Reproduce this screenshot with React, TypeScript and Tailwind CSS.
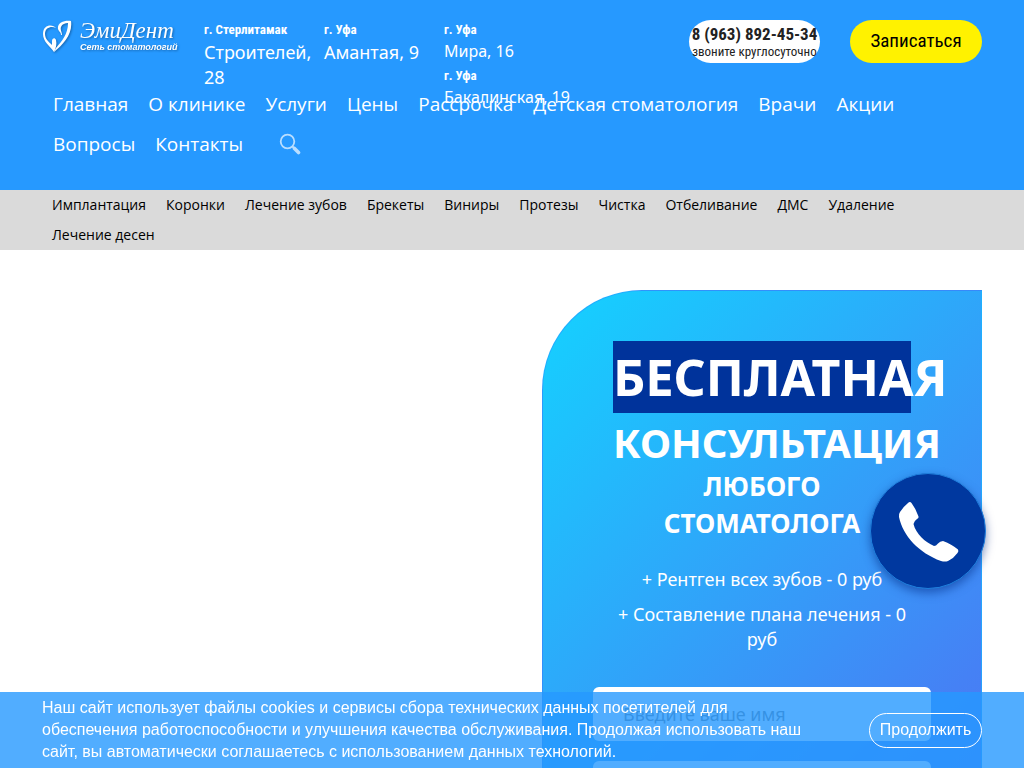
import React from 'react';

const MENU = [
  'Главная',
  'О клинике',
  'Услуги',
  'Цены',
  'Рассрочка',
  'Детская стоматология',
  'Врачи',
  'Акции',
  'Вопросы',
  'Контакты',
];

const SERVICES = [
  'Имплантация',
  'Коронки',
  'Лечение зубов',
  'Брекеты',
  'Виниры',
  'Протезы',
  'Чистка',
  'Отбеливание',
  'ДМС',
  'Удаление',
  'Лечение десен',
];

const Logo: React.FC = () => (
  <a href="#" className="flex w-[162px] shrink-0 items-start text-white">
    <svg viewBox="0 0 30 34" className="mr-2 h-[34px] w-[30px] drop-shadow-[1px_1px_1px_#1565b0]" fill="currentColor">
      <path d="M14 8C11 4 1 4 1 14c0 8 7 12 11 18 2-4 3-8 2-12-1-3-4-2-4 1v4C7 22 3 19 3 14c0-7 7-8 11-6Z" />
      <path d="M29 1C22 0 15 3 16 9c1 3 3 3 3 6h1c0-3-2-5-1-8 1-3 4-4 7-4 0 11-6 18-12 25-1 2-2 3-2 4C21 25 31 14 29 1Z" />
    </svg>
    <span className="flex flex-col whitespace-nowrap italic drop-shadow-[1px_1px_1px_#1565b0]">
      <span className="font-['Liberation_Serif',serif] text-[23px] leading-[22px]">ЭмиДент</span>
      <span className="font-['Liberation_Sans',sans-serif] text-[9px] font-bold leading-[10px]">
        Сеть стоматологий
      </span>
    </span>
  </a>
);

const Address: React.FC<{ city: string; street: string; small?: boolean }> = ({ city, street, small }) => (
  <div>
    <div className="font-['Roboto_Condensed','Liberation_Sans_Narrow',sans-serif] text-[13px] font-bold leading-5">
      {city}
    </div>
    <div className={small ? 'whitespace-nowrap pb-1 text-base leading-[22px]' : 'text-lg leading-[25px]'}>{street}</div>
  </div>
);

const Header: React.FC = () => (
  <header className="bg-[#2699ff] px-[42px] pt-5 pb-[26px] text-white">
    {/* contacts: the last address column runs over the menu */}
    <div className="flex h-16 items-start">
      <Logo />
      <div className="grid grid-cols-[120px_120px_120px]">
        <Address city="г. Стерлитамак" street="Строителей, 28" />
        <Address city="г. Уфа" street="Амантая, 9" />
        <div>
          <Address city="г. Уфа" street="Мира, 16" small />
          <Address city="г. Уфа" street="Бакалинская, 19" small />
        </div>
      </div>
      <div className="ml-auto flex gap-[30px] font-['Roboto_Condensed','Liberation_Sans_Narrow',sans-serif]">
        <a
          href="tel:89638924534"
          className="flex h-[43px] w-[131px] flex-col items-center justify-center whitespace-nowrap rounded-full bg-white text-[#222]"
        >
          <span className="text-[17px] font-bold leading-5">8 (963) 892-45-34</span>
          <span className="text-[13px] leading-4">звоните круглосуточно</span>
        </a>
        <button className="h-[43px] w-[132px] rounded-full bg-[#fff200] text-[19px] text-black">Записаться</button>
      </div>
    </div>
    <nav className="flex flex-wrap items-center gap-x-5 px-[11px] font-['Open_Sans',sans-serif] text-[19px] leading-10">
      {MENU.map((item) => (
        <a key={item} href="#" className="whitespace-nowrap">
          {item}
        </a>
      ))}
      <button aria-label="Поиск" className="ml-4">
        <svg viewBox="0 0 22 22" className="size-[22px]" fill="none" stroke="#b9deff">
          <circle cx="8.5" cy="8.5" r="6.8" strokeWidth="1.8" />
          <path d="m13.5 13.5 2 2" strokeWidth="2" />
          <path d="m15.5 15.5 4 4" strokeWidth="3.6" strokeLinecap="round" />
        </svg>
      </button>
    </nav>
  </header>
);

const ServicesNav: React.FC = () => (
  <nav className="flex flex-wrap gap-x-5 bg-[#dadada] px-[52px] font-['Open_Sans',sans-serif] text-sm leading-[30px] text-black">
    {SERVICES.map((item) => (
      <a key={item} href="#" className="whitespace-nowrap">
        {item}
      </a>
    ))}
  </nav>
);

const OfferCard: React.FC = () => (
  <section className="w-[440px] rounded-tl-[100px] border border-[#2699ff]/60 bg-[linear-gradient(135deg,#14d2ff_0px,#4581f5_573px,#586af0_800px)] px-[50px] pt-[50px] pb-20 text-center text-white">
    <h1 className="px-5 font-bold">
      <span className="block bg-[#00339b] text-left text-[50px] leading-[72px]">БЕСПЛАТНАЯ</span>
      <span className="block pt-1 text-left text-[40px] leading-[51px]">КОНСУЛЬТАЦИЯ</span>
      <span className="block text-[26px] leading-[37px]">ЛЮБОГО СТОМАТОЛОГА</span>
    </h1>
    <ul className="mt-[25px] flex flex-col gap-[10px] px-5 text-lg leading-[25px]">
      <li>+ Рентген всех зубов - 0 руб</li>
      <li>+ Составление плана лечения - 0 руб</li>
    </ul>
    <form className="mt-[35px] flex flex-col gap-5">
      <input
        type="text"
        aria-label="Имя"
        placeholder="Введите ваше имя"
        className="h-[54px] rounded-md bg-white px-[30px] text-lg text-black placeholder:text-[#757575]"
      />
      <input type="tel" aria-label="Телефон" className="h-[54px] rounded-md bg-white px-[30px] text-lg text-black" />
    </form>
  </section>
);

const CallButton: React.FC = () => (
  <button
    aria-label="Позвонить"
    className="fixed right-[38px] bottom-[179px] flex size-[116px] items-center justify-center rounded-full border border-[#1f7fdc] bg-[#00389f] shadow-[0_4px_10px_rgba(0,40,130,0.5)]"
  >
    <svg viewBox="0 0 62 62" className="size-[62px]" fill="#fff">
      <path d="M11 3Q13 1 14.500 3Q19 9 21.500 16.500Q22 18 20 19Q17 21 16.500 24C19 34 28 42 37 46Q39 46 41 43.500Q43 41 46 41Q55 44.500 61 49.500Q62 51 60.500 53Q57 58 51 61Q48 62 44 61C22 53 6 36 2 17Q1.500 14 3 12Q6 7 11 3Z" />
    </svg>
  </button>
);

const CookieBar: React.FC = () => (
  <div className="fixed inset-x-0 bottom-0 flex items-center bg-[#2699ff]/80 px-[42px] py-[5px] font-['Liberation_Sans',Arial,sans-serif] text-base leading-[22px] text-white">
    <p className="mr-[60px] flex-1">
      Наш сайт использует файлы cookies и сервисы сбора технических данных посетителей для обеспечения
      работоспособности и улучшения качества обслуживания. Продолжая использовать наш сайт, вы автоматически
      соглашаетесь с использованием данных технологий.
    </p>
    <button className="h-[35px] w-[113px] rounded-full border border-white">Продолжить</button>
  </div>
);

const App: React.FC = () => (
  <div className="h-screen overflow-hidden bg-white font-['Noto_Sans',sans-serif]">
    <Header />
    <ServicesNav />
    <main className="flex justify-end px-[42px] pt-10">
      <OfferCard />
    </main>
    <CallButton />
    <CookieBar />
  </div>
);

export default App;
